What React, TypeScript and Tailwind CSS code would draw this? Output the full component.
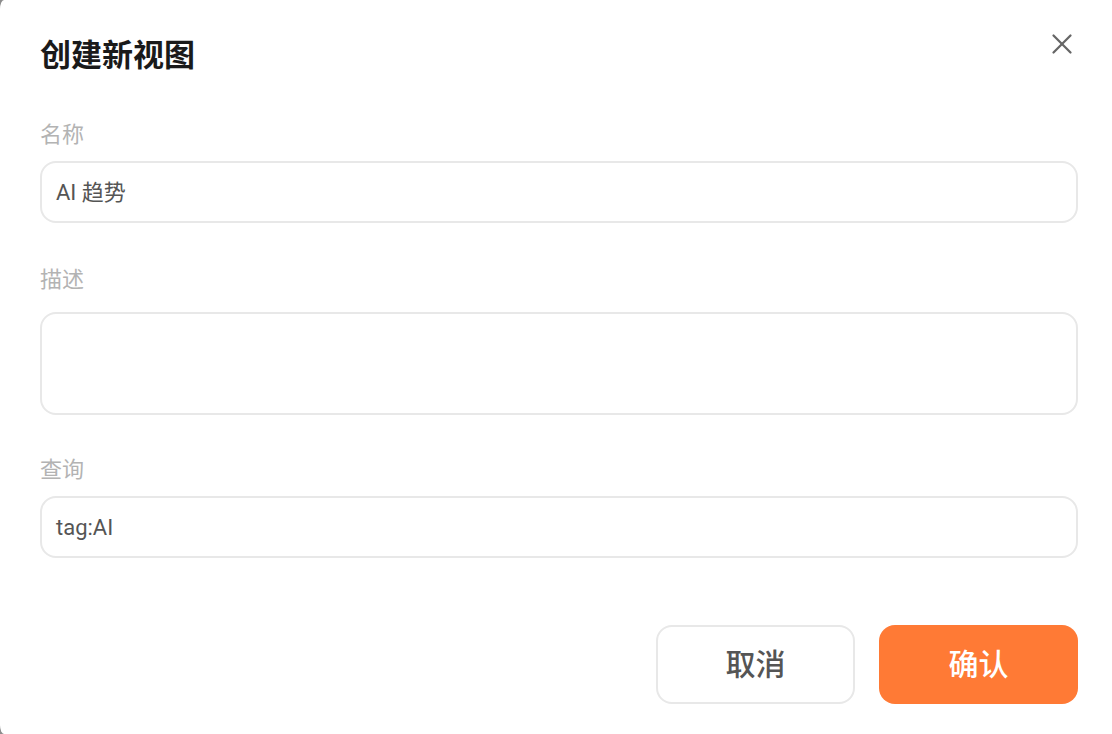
import { X } from "lucide-react";

const font = { fontFamily: "Roboto, 'Noto Sans CJK SC', sans-serif" };

function Field({ label, value, tall, className }: { label: string; value?: string; tall?: boolean; className?: string }) {
  return (
    <div className={"flex flex-col " + (className ?? "")}>
      <div className="h-[30px] text-[22px] leading-[30px] text-[#b3b3b3]">{label}</div>
      <div
        className={
          "flex rounded-[16px] border-2 border-[#e8e8e8] px-[14px] text-[22px] text-[#555555] " +
          (tall ? "mt-[17px] h-[103px] items-start pt-[14px]" : "mt-[11px] h-[62px] items-center")
        }
      >
        {value}
      </div>
    </div>
  );
}

export default function App() {
  return (
    <div className="h-[734px] w-[1112px] overflow-hidden bg-[#8c8c8c]" style={font}>
      <div className="flex h-full w-full flex-col rounded-tl-[4px_9px] rounded-bl-[4px_9px] bg-white pl-[40px] pr-[34px]">
        <div className="flex h-[110px] items-center justify-between">
          <h1 className="pt-[2px] text-[31px] font-bold text-[#1a1a1a]">创建新视图</h1>
          <X className="-mr-[1px] mb-[22px] h-[34px] w-[34px] text-[#666666]" strokeWidth={1.6} />
        </div>
        <div className="mt-[10px] flex flex-col">
          <Field label="名称" value="AI 趋势" />
          <Field label="描述" tall className="mt-[42px]" />
          <Field label="查询" value="tag:AI" className="mt-[40px]" />
        </div>
        <div className="mt-[67px] flex justify-end gap-[24px]">
          <button className="h-[79px] w-[199px] rounded-[16px] border-2 border-[#e8e8e8] bg-white text-[30px] font-medium text-[#555555]">
            取消
          </button>
          <button className="h-[79px] w-[199px] rounded-[16px] bg-[#ff7a35] text-[30px] font-medium text-white">
            确认
          </button>
        </div>
      </div>
    </div>
  );
}
